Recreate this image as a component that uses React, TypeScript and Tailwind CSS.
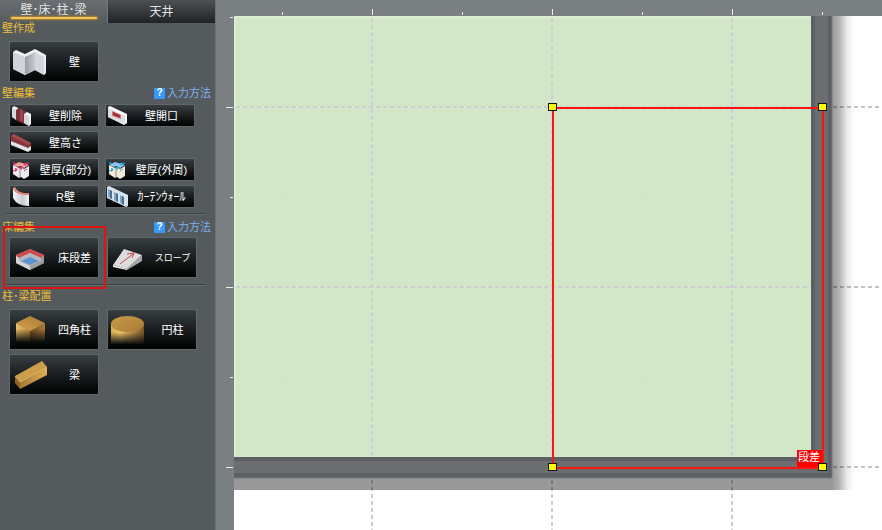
import type { ReactNode } from 'react';

function WallIcon() {
  return (
    <>
      <defs>
        <linearGradient id="wallFold">
          <stop offset="0" stopColor="#989ca5" />
          <stop offset="1" stopColor="#c6c9d0" />
        </linearGradient>
      </defs>
      <path d="M3 10 L6 8 L15 12 L25 7 L36 13 V31 L34 33 L25 28 L15 33 L3 27Z" fill="#eceef2" />
      <path d="M3 10 L15 15 V33 L3 27Z" fill="#d0d3da" />
      <path d="M15 15 L25 10 V28 L15 33Z" fill="url(#wallFold)" />
      <path d="M25 10 L34 15 V33 L25 28Z" fill="#d3d6dc" />
    </>
  );
}

function StepIcon() {
  return (
    <>
      <path d="M6 17 L20 11 L34 17 V25 L20 32 L6 25Z" fill="#a3a3a3" />
      <path d="M6 17 L20 11 L34 17 L31 20 L20 15 L9 20Z" fill="#cf4b4b" />
      <path d="M9 20 L20 15 L31 20 V23 L20 28 L9 23Z" fill="#b4b9be" />
      <path d="M11 23 L20 19 L29 23 L20 27Z" fill="#5b95d2" />
      <path d="M6 18 L9 20 V23 L20 28 V32 L6 25Z" fill="#d6d6d6" />
      <path d="M34 18 L31 20 V23 L20 28 V32 L34 25Z" fill="#9c9c9c" />
    </>
  );
}

function SlopeIcon() {
  return (
    <>
      <path d="M5 27 L16 11 L34 17 L19 31Z" fill="#dcdcdc" />
      <path d="M34 17 V23 L19 32 V31Z" fill="#a9a9a9" />
      <path d="M5 27 L19 31 V32 L5 29Z" fill="#f2f2f2" />
      <path d="M12 26 L25 16 M19 16 L26 15 L24 20" fill="none" stroke="#cc4444" strokeWidth="1" />
    </>
  );
}

function SquareColumnIcon() {
  return (
    <>
      <defs>
        <linearGradient id="cubeTop" x1="0" x2="1" y1="1" y2="0">
          <stop offset="0" stopColor="#d5a34c" />
          <stop offset="1" stopColor="#a87a34" />
        </linearGradient>
        <linearGradient id="cubeLeft">
          <stop offset="0" stopColor="#e9bf66" />
          <stop offset="1" stopColor="#c08f40" />
        </linearGradient>
        <linearGradient id="cubeRight">
          <stop offset="0" stopColor="#7b531f" />
          <stop offset="1" stopColor="#a87a3a" />
        </linearGradient>
        <linearGradient id="cubeFade" x1="0" x2="0" y1="0" y2="1">
          <stop offset="0.3" stopColor="#0c0d0e" stopOpacity="0" />
          <stop offset="1" stopColor="#0c0d0e" />
        </linearGradient>
      </defs>
      <path d="M6 13 L20 20 V32 H6Z" fill="url(#cubeLeft)" />
      <path d="M35 13 L20 20 V32 H35Z" fill="url(#cubeRight)" />
      <rect x="5" y="13" width="31" height="19" fill="url(#cubeFade)" />
      <path d="M6 13 L20 6 L35 13 L20 21Z" fill="url(#cubeTop)" />
    </>
  );
}

function RoundColumnIcon() {
  return (
    <>
      <defs>
        <linearGradient id="roundBody">
          <stop offset="0" stopColor="#dcaf55" />
          <stop offset="0.3" stopColor="#f0c76a" />
          <stop offset="1" stopColor="#7a5426" />
        </linearGradient>
        <linearGradient id="roundFade" x1="0" x2="0" y1="0" y2="1">
          <stop offset="0.4" stopColor="#0c0d0e" stopOpacity="0" />
          <stop offset="1" stopColor="#0c0d0e" />
        </linearGradient>
        <linearGradient id="roundTop" x1="0" x2="1" y1="0" y2="1">
          <stop offset="0" stopColor="#c99a48" />
          <stop offset="1" stopColor="#a87c35" />
        </linearGradient>
      </defs>
      <rect x="3" y="14" width="33" height="20" fill="url(#roundBody)" />
      <rect x="3" y="14" width="33" height="20" fill="url(#roundFade)" />
      <ellipse cx="19.5" cy="14" rx="16.5" ry="8" fill="url(#roundTop)" />
    </>
  );
}

function BeamIcon() {
  return (
    <>
      <defs>
        <linearGradient id="beamSide" x1="1" x2="0">
          <stop offset="0" stopColor="#dcae56" />
          <stop offset="1" stopColor="#a87832" />
        </linearGradient>
      </defs>
      <path d="M5 21 L32 6 L37 12 L10 27Z" fill="#cc9d4a" />
      <path d="M10 27 L37 12 V20 L10 34Z" fill="url(#beamSide)" />
      <path d="M5 21 L10 27 V34 L5 28Z" fill="#8e6228" />
      <path d="M5 21 L10 27 L37 12" fill="none" stroke="#dfb765" strokeWidth="1" />
    </>
  );
}

function WallDeleteIcon() {
  return (
    <>
      <path d="M2 3 L4 1 L8 3 V14 L2 12Z" fill="#f4f4f6" />
      <path d="M2 3 L6 5 V15 L2 12Z" fill="#d4d6dc" />
      <path d="M6 5 L9 3 L17 7 L14 9 V19 L6 15Z" fill="#7c3038" />
      <path d="M10 4 L13 5 V17 L10 16Z" fill="#9a444c" />
      <path d="M14 9 L17 7 L21 9 V19 L19 21 L14 18Z" fill="#f4f4f6" />
      <path d="M14 9 L19 11 V21 L14 18Z" fill="#d4d6dc" />
    </>
  );
}

function WallOpeningIcon() {
  return (
    <>
      <path d="M2 2 L4 1 L21 9 V18 L18 20 L2 12Z" fill="#fafafa" />
      <path d="M2 3 L19 11 V19 L2 12Z" fill="#dcdde2" />
      <path d="M6 6 L15 10 V14 L6 11Z" fill="#d2767b" />
      <path d="M7 7 L14 10 V13 L7 10Z" fill="#a12f38" />
    </>
  );
}

function WallHeightIcon() {
  return (
    <>
      <path d="M1 4 L4 2 L21 11 V15 L18 17 L1 9Z" fill="#86343c" />
      <path d="M1 4 L4 2 L21 11 L18 13Z" fill="#a0484f" />
      <path d="M1 9 L18 16 L21 14 V18 L18 20 L1 13Z" fill="#e2e3e7" />
    </>
  );
}

function ThicknessIcon({ arrow, top, wall }: { arrow: string; top: string; wall: string }) {
  return (
    <>
      <path d="M3 6 L9 9 V19 L3 15Z" fill={wall} />
      <path d="M9 9 L11 8 V18 L9 19Z" fill="#b9bbc1" />
      <path d="M11 8 L14 10 V20 L11 18Z" fill={wall} />
      <path d="M14 10 L19 7 V17 L14 20Z" fill={wall} />
      <path d="M3 6 L9 3 L19 6 L14 9 L10 7 L8 8Z" fill={top} />
      <path d="M15 5 L19 4 M10 9 L13 8 M3 12 L7 11 M14 12 L17 10" stroke={arrow} fill="none" />
      <path d="M13 5 L16 3 L16 7Z M9 9 L12 7 L12 11Z M8 10 L5 9 L5 13Z M3 3 L6 4 L4 6Z" fill={arrow} />
    </>
  );
}

function CurvedWallIcon() {
  return (
    <>
      <defs>
        <linearGradient id="curve">
          <stop offset="0" stopColor="#f4f4f5" />
          <stop offset="0.6" stopColor="#c9cbcf" />
          <stop offset="1" stopColor="#eeeef0" />
        </linearGradient>
      </defs>
      <path d="M3 2 Q5 9 19 9 V20 Q7 20 3 12Z" fill="url(#curve)" />
      <path d="M3 2 L5 1 Q8 8 19 7 V9 Q6 10 3 2Z" fill="#ee8a80" />
    </>
  );
}

function CurtainWallIcon() {
  return (
    <>
      <path d="M1 1 L3 0 L22 9 V20 L20 21 L1 12Z" fill="#d7e4ee" />
      <path d="M2 3 L6 5 V13 L2 11Z M8 6 L12 8 V16 L8 14Z M14 9 L18 11 V19 L14 17Z" fill="#7fa6c4" />
      <path d="M4 4 L6 5 V13 L4 12Z M10 7 L12 8 V16 L10 15Z M16 10 L18 11 V19 L16 18Z" fill="#476f90" />
    </>
  );
}

interface ToolProps {
  label: string;
  icon: ReactNode;
  small?: boolean;
  labelSize?: string;
}

function ToolButton({ label, icon, small, labelSize = 'text-[11px]' }: ToolProps) {
  const w = small ? 23 : 41;
  const h = small ? 21 : 39;
  return (
    <button
      type="button"
      className={`flex w-[90px] items-center border border-[#60666a] bg-linear-to-b from-[#383e42] to-[#030404] text-white ${
        small ? 'h-[23px]' : 'h-[41px]'
      }`}
    >
      <svg width={w} height={h} viewBox={`0 0 ${w} ${h}`} className="shrink-0" aria-hidden="true">
        {icon}
      </svg>
      <span className={`flex-1 text-center whitespace-nowrap ${labelSize}`}>{label}</span>
    </button>
  );
}

function SectionHead({ title, help }: { title: string; help?: boolean }) {
  return (
    <div className="flex h-3 items-center justify-between pr-1 pl-0.5">
      <h2 className="text-[#edbd3a]">{title}</h2>
      {help && (
        <a href="#help" className="flex items-center gap-0.5 text-[#7db0ef]">
          <span className="flex h-[11px] w-[11px] items-center justify-center bg-[#3598fb] text-[10px] font-bold text-white">
            ?
          </span>
          入力方法
        </a>
      )}
    </div>
  );
}

function Divider() {
  return <hr className="mr-[9px] ml-1.5 h-0.5 border-t border-b border-t-[#3b4043] border-b-[#666b6e]" />;
}

function Sidebar() {
  return (
    <aside className="w-[216px] shrink-0 border-r border-[#6d7275] bg-[#555a5d] text-[11px] leading-3">
      <div role="tablist" className="flex h-[23px]">
        <button
          type="button"
          role="tab"
          aria-selected="true"
          className="flex flex-1 flex-col items-center bg-linear-to-b from-[#6b6f73] to-[#555a5d] pt-1 text-xs leading-3 text-[#e1e3e5]"
        >
          壁･床･柱･梁
          <span className="mt-px h-0.5 w-[86px] rounded-full bg-[#f1c65c] shadow-[0_0_2px_1px_#b5852b]" />
        </button>
        <button
          type="button"
          role="tab"
          aria-selected="false"
          className="flex-1 border-l border-[#717679] bg-linear-to-b from-[#4c5155] to-[#202426] text-xs text-[#e1e3e5]"
        >
          天井
        </button>
      </div>

      <section className="-mt-px flex flex-col">
        <SectionHead title="壁作成" />
        <div className="mt-[7px] pl-[9px]">
          <ToolButton label="壁" icon={<WallIcon />} />
        </div>
      </section>

      <section className="mt-[5px]">
        <SectionHead title="壁編集" help />
        <div className="mt-[5px] mb-[5px] grid w-fit grid-cols-2 gap-x-1.5 gap-y-1 pl-[9px]">
          <ToolButton small label="壁削除" icon={<WallDeleteIcon />} />
          <ToolButton small label="壁開口" icon={<WallOpeningIcon />} />
          <div className="col-span-2">
            <ToolButton small label="壁高さ" icon={<WallHeightIcon />} />
          </div>
          <ToolButton
            small
            label="壁厚(部分)"
            icon={<ThicknessIcon arrow="#e8306a" top="#f2a09c" wall="#eceaec" />}
          />
          <ToolButton
            small
            label="壁厚(外周)"
            icon={<ThicknessIcon arrow="#20b4e4" top="#8fc4f2" wall="#f3ecd2" />}
          />
          <ToolButton small label="R壁" icon={<CurvedWallIcon />} />
          <ToolButton small label="ｶｰﾃﾝｳｫｰﾙ" labelSize="text-xs" icon={<CurtainWallIcon />} />
        </div>
        <Divider />
      </section>

      <section className="mt-1.5">
        <SectionHead title="床編集" help />
        <div className="relative mt-1 mb-1.5 flex gap-2 pl-[9px]">
          <ToolButton label="床段差" icon={<StepIcon />} />
          <ToolButton label="スロープ" labelSize="text-[9px]" icon={<SlopeIcon />} />
          <span className="pointer-events-none absolute -top-[11px] left-[3px] h-[63px] w-[103px] border-2 border-[#dd1410]" />
        </div>
        <Divider />
      </section>

      <section className="mt-1">
        <SectionHead title="柱･梁配置" />
        <div className="mt-[7px] grid w-fit grid-cols-2 gap-x-2 gap-y-1 pl-[9px]">
          <ToolButton label="四角柱" icon={<SquareColumnIcon />} />
          <ToolButton label="円柱" icon={<RoundColumnIcon />} />
          <ToolButton label="梁" icon={<BeamIcon />} />
        </div>
      </section>
    </aside>
  );
}

const GRID_X = [156, 336, 516];
const GRID_Y = [107, 287, 467];
const HALF_X = [66, 246, 426, 606];
const HALF_Y = [17, 197, 377];
const HANDLES = [
  [336, 107],
  [606, 107],
  [336, 467],
  [606, 467],
];

function FloorPlan() {
  return (
    <main className="relative min-w-0 flex-1 overflow-hidden bg-[#7a7f82]">
      <svg className="absolute inset-0 h-full w-full" role="img" aria-label="床段差">
        <defs>
          <linearGradient id="shade">
            <stop offset="0" stopColor="#999" />
            <stop offset="0.3" stopColor="#b0b0b0" />
            <stop offset="0.7" stopColor="#ebebeb" />
            <stop offset="1" stopColor="#fff" />
          </linearGradient>
        </defs>
        <rect x="18" y="16" width="100%" height="100%" fill="#fff" />

        {/* shadow under the outer walls */}
        <rect x="18" y="477" width="599" height="13" fill="#999" />
        <rect x="616" y="16" width="22" height="474" fill="url(#shade)" />

        {/* grid outside the building */}
        <g stroke="#000" strokeOpacity="0.2" strokeWidth="2" strokeDasharray="4 3">
          {GRID_X.map((x) => (
            <line key={x} x1={x} y1="480" x2={x} y2="100%" />
          ))}
        </g>
        <g stroke="#000" strokeOpacity="0.24" strokeDasharray="4 3" strokeWidth="2">
          {GRID_Y.map((y) => (
            <line key={y} x1="617" y1={y} x2="100%" y2={y} />
          ))}
        </g>

        <rect x="18" y="16" width="578" height="442" fill="#d2e7c8" />
        <path d="M19 457 V17 H595" fill="none" stroke="#e4f1de" strokeWidth="1" />
        <g stroke="#d0cdd2" strokeWidth="2" strokeDasharray="4 3">
          {GRID_X.map((x) => (
            <line key={x} x1={x} y1="18" x2={x} y2="457" />
          ))}
          {GRID_Y.map((y) => (
            <line key={y} x1="20" y1={y} x2="595" y2={y} />
          ))}
        </g>
        {[66, 426].map((x) =>
          [197, 377].map((y) => (
            <rect key={`${x}-${y}`} x={x} y={y} width="1" height="1" fill="#b4c4b0" />
          )),
        )}

        {/* walls: dark faces with a lighter core */}
        <path d="M595 16 H616 V478 H18 V457 H595Z" fill="#5c5f66" />
        <path d="M599 16 H612 V473 H18 V461 H599Z" fill="#6b6d6e" />
        <path d="M616 16 V478 H18" fill="none" stroke="#77797b" strokeWidth="1" />

        <g stroke="#eceded" strokeWidth="1" shapeRendering="crispEdges">
          {GRID_X.map((x) => (
            <line key={x} x1={x} x2={x} y1="9" y2="15" />
          ))}
          {HALF_X.map((x) => (
            <line key={x} x1={x} x2={x} y1="12" y2="15" />
          ))}
          {GRID_Y.map((y) => (
            <line key={y} x1="10" x2="17" y1={y} y2={y} />
          ))}
          {HALF_Y.map((y) => (
            <line key={y} x1="14" x2="17" y1={y} y2={y} />
          ))}
        </g>

        <rect x="581" y="450" width="26" height="18" fill="#f00" />
        <rect x="337" y="108" width="270" height="360" fill="none" stroke="#fb1414" strokeWidth="2" />
        <text x="582" y="461" fontSize="11" fill="#fff">
          段差
        </text>
        {HANDLES.map(([x, y]) => (
          <g key={`${x}-${y}`}>
            <rect x={x - 4} y={y - 4} width="9" height="8" fill="#14140a" />
            <rect x={x - 3} y={y - 3} width="7" height="6" fill="#ff0" />
          </g>
        ))}
      </svg>
    </main>
  );
}

export default function App() {
  return (
    <div className='flex min-h-screen font-["Liberation_Sans","Noto_Sans_CJK_JP",sans-serif]'>
      <Sidebar />
      <FloorPlan />
    </div>
  );
}
